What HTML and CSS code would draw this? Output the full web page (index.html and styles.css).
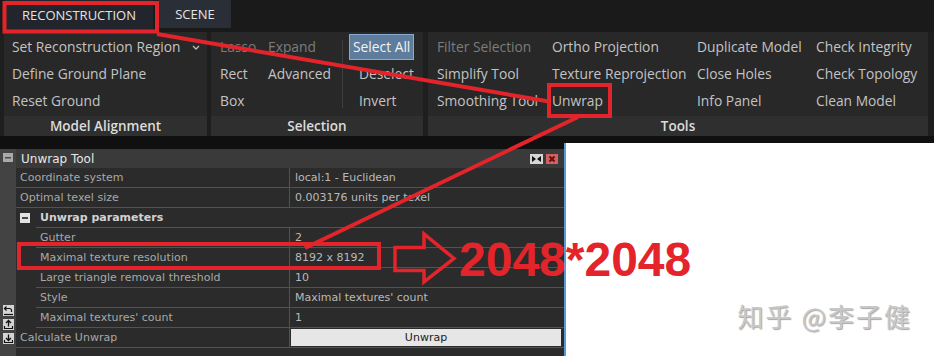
FILE: index.html
```html
<!DOCTYPE html>
<html lang="en">
<head>
  <meta charset="UTF-8">
  <title>Unwrap Tool</title>
  <link rel="stylesheet" href="styles.css">
</head>
<body>

<div class="ribbon">
  <div class="tabs">
    <div class="tab tab-active">RECONSTRUCTION</div>
    <div class="tab-sep"></div>
    <div class="tab">SCENE</div>
  </div>

  <div class="groups">
    <div class="group group-align">
      <div class="items">
        <div class="col">
          <div class="item">Set Reconstruction Region
            <svg class="chev" width="8" height="5" viewBox="0 0 8 5"><path d="M1 1 L4 4 L7 1" fill="none" stroke="#bdbdbd" stroke-width="1.3"/></svg>
          </div>
          <div class="item">Define Ground Plane</div>
          <div class="item">Reset Ground</div>
        </div>
      </div>
      <div class="group-label">Model Alignment</div>
    </div>

    <div class="group group-select">
      <div class="items">
        <div class="col col-sel1">
          <div class="item off">Lasso</div>
          <div class="item">Rect</div>
          <div class="item">Box</div>
        </div>
        <div class="col col-sel2">
          <div class="item off">Expand</div>
          <div class="item">Advanced</div>
        </div>
        <div class="vsep"></div>
        <div class="col col-sel3">
          <div class="item"><span class="btn-select">Select All</span></div>
          <div class="item pad">Deselect</div>
          <div class="item pad">Invert</div>
        </div>
      </div>
      <div class="group-label">Selection</div>
    </div>

    <div class="group group-tools">
      <div class="items">
        <div class="col col-t1">
          <div class="item off">Filter Selection</div>
          <div class="item">Simplify Tool</div>
          <div class="item">Smoothing Tool</div>
        </div>
        <div class="col col-t2">
          <div class="item">Ortho Projection</div>
          <div class="item">Texture Reprojection</div>
          <div class="item">Unwrap</div>
        </div>
        <div class="col col-t3">
          <div class="item">Duplicate Model</div>
          <div class="item">Close Holes</div>
          <div class="item">Info Panel</div>
        </div>
        <div class="col">
          <div class="item">Check Integrity</div>
          <div class="item">Check Topology</div>
          <div class="item">Clean Model</div>
        </div>
      </div>
      <div class="group-label">Tools</div>
    </div>
  </div>
</div>

<div class="lower">
  <div class="panel">
    <div class="side">
      <svg class="collapse" width="10" height="9" viewBox="0 0 10 9"><rect width="10" height="9" fill="#a9a9a9"/><rect x="2" y="4" width="6" height="1.5" fill="#4a4a4a"/></svg>
      <div class="side-tools">
        <svg width="11" height="11" viewBox="0 0 11 11"><rect width="11" height="11" fill="#d4d4d4"/><path d="M3.5 1.5 L1.5 3.5 L3.5 5.5 M1.5 3.5 H6.5 Q8.5 3.5 8.5 5.5 V7" fill="none" stroke="#111" stroke-width="1.2"/><path d="M1 9.5 H10" stroke="#111" stroke-width="1.2"/></svg>
        <svg width="11" height="11" viewBox="0 0 11 11"><rect width="11" height="11" fill="#d4d4d4"/><path d="M5.5 1.5 V7.5 M3 4 L5.5 1.5 L8 4" fill="none" stroke="#111" stroke-width="1.3"/><path d="M1.5 7 V9.5 H9.5 V7" fill="none" stroke="#111" stroke-width="1.2"/></svg>
        <svg width="11" height="11" viewBox="0 0 11 11"><rect width="11" height="11" fill="#d4d4d4"/><path d="M5.5 1.5 V7.5 M3 5 L5.5 7.5 L8 5" fill="none" stroke="#111" stroke-width="1.3"/><path d="M1.5 7 V9.5 H9.5 V7" fill="none" stroke="#111" stroke-width="1.2"/></svg>
      </div>
    </div>

    <div class="main">
      <div class="titlebar">
        <span>Unwrap Tool</span>
        <div class="tb-btns">
          <svg width="13" height="10" viewBox="0 0 13 10"><rect width="13" height="10" fill="#d6d6d6"/><path d="M2 2 L6 5 L2 8 Z M11 2 L7 5 L11 8 Z" fill="#111"/></svg>
          <svg width="12" height="10" viewBox="0 0 12 10"><rect width="12" height="10" fill="#cf6262"/><path d="M3.5 2.5 L8.5 7.5 M8.5 2.5 L3.5 7.5" stroke="#6e0c0c" stroke-width="2"/></svg>
        </div>
      </div>

      <div class="row">
        <div class="name">Coordinate system</div>
        <div class="val">local:1 - Euclidean</div>
      </div>
      <div class="row">
        <div class="name">Optimal texel size</div>
        <div class="val">0.003176 units per texel</div>
      </div>
      <div class="row row-cat">
        <div class="indent">
          <svg width="10" height="10" viewBox="0 0 10 10"><rect width="10" height="10" fill="#e2e2e2"/><rect x="2" y="4.2" width="6" height="1.6" fill="#222"/></svg>
        </div>
        <div class="name">Unwrap parameters</div>
      </div>
      <div class="row">
        <div class="indent"></div>
        <div class="name sub">Gutter</div>
        <div class="val">2</div>
      </div>
      <div class="row">
        <div class="indent"></div>
        <div class="name sub">Maximal texture resolution</div>
        <div class="val">8192 x 8192</div>
      </div>
      <div class="row">
        <div class="indent"></div>
        <div class="name sub">Large triangle removal threshold</div>
        <div class="val">10</div>
      </div>
      <div class="row">
        <div class="indent"></div>
        <div class="name sub">Style</div>
        <div class="val">Maximal textures' count</div>
      </div>
      <div class="row">
        <div class="indent"></div>
        <div class="name sub">Maximal textures' count</div>
        <div class="val">1</div>
      </div>
      <div class="row">
        <div class="name">Calculate Unwrap</div>
        <div class="val btn-cell"><div class="unwrap-btn">Unwrap</div></div>
      </div>
    </div>
  </div>

  <div class="canvas">
    <div class="watermark">知乎 @李子健</div>
  </div>
</div>

<!-- red annotations drawn over the screenshot -->
<svg class="annot" width="934" height="356" viewBox="0 0 934 356">
  <g fill="none" stroke="#e3242b" stroke-width="4">
    <rect x="4.5" y="3" width="152.5" height="28.5"/>
    <line x1="157" y1="34" x2="549" y2="101.5"/>
    <rect x="549" y="85" width="61" height="31"/>
    <line x1="578" y1="117" x2="305" y2="248"/>
    <rect x="19" y="244" width="360" height="24"/>
  </g>
  <polygon points="395,247.5 424,247.5 424,234 454,258.5 424,282 424,270.5 395,270.5" fill="none" stroke="#e3242b" stroke-width="3.5"/>
</svg>
<div class="big-note">2048*2048</div>

</body>
</html>
```

FILE: styles.css
```css
* { margin: 0; padding: 0; box-sizing: border-box; }
body {
  width: 934px;
  height: 356px;
  overflow: hidden;
  position: relative;
  background-color: #101010;
  font-family: 'Open Sans', 'Noto Sans', sans-serif;
}

/* ribbon */
.ribbon {
  height: 136px;
  margin-bottom: 7px;
  background-color: #1e1e1e;
}
.tabs {
  height: 32px;
  display: flex;
  padding-left: 5px;
  background-color: #1a1a1a;
}
.tab {
  display: flex;
  align-items: center;
  justify-content: center;
  height: 28px;
  width: 72px;
  font-size: 13px;
  color: #e4e4e4;
  background-color: #2a2f37;
}
.tab-active {
  width: 148px;
  height: 32px;
  padding-bottom: 3px;
  background-color: #22262c;
}
.tab-sep {
  width: 1px;
  height: 24px;
  margin: 3px 3px 0 2px;
  background-color: #555;
}
.groups {
  display: flex;
  height: 104px;
  padding-left: 4px;
}
.group {
  display: flex;
  flex-direction: column;
}
.group-align { width: 203px; margin-right: 4px; }
.group-select { width: 212px; margin-right: 5px; }
.group-tools { width: 500px; }
.items {
  height: 84px;
  display: flex;
  padding: 1px 0 0 9px;
  background-color: #282828;
}
.group-align .items { padding-left: 8px; }
.group-label {
  height: 20px;
  line-height: 20px;
  text-align: center;
  font-size: 13.5px;
  font-weight: 600;
  color: #dcdcdc;
  background-color: #2f2f2f;
}
.item {
  height: 27px;
  line-height: 27px;
  font-size: 13.8px;
  color: #c3c3c3;
  white-space: nowrap;
}
.item.off { color: #7c7c7c; }
.item.pad { padding-left: 10px; }
.chev {
  margin-left: 8px;
  vertical-align: 2px;
}
.col-sel1 { width: 48px; }
.col-sel2 { width: 74px; }
.col-sel3 { padding-left: 6px; }
.vsep {
  width: 1px;
  margin: 7px 0 8px;
  background-color: #3f3f3f;
}
.btn-select {
  display: inline-block;
  height: 26px;
  line-height: 24px;
  padding: 0 3px;
  border: 1px solid #86aad2;
  background-color: #5e7c9c;
  color: #f2f2f2;
}
.col-t1 { width: 115px; }
.col-t2 { width: 145px; }
.col-t3 { width: 119px; }

/* lower part: tool panel + canvas */
.lower {
  display: flex;
  height: 213px;
}
.panel {
  width: 564px;
  display: flex;
  padding-top: 6px;
}
.side {
  width: 16px;
  display: flex;
  flex-direction: column;
  align-items: center;
  background-color: #434343;
}
.collapse { margin-top: 4px; }
.side-tools {
  margin-top: auto;
  padding-bottom: 12px;
  display: flex;
  flex-direction: column;
  gap: 3px;
}
.main {
  flex: 1;
  background-color: #2b2b2b;
  font-family: 'DejaVu Sans', Verdana, sans-serif;
}
.titlebar {
  height: 19px;
  display: flex;
  align-items: center;
  justify-content: space-between;
  padding: 0 6px 0 5px;
  font-size: 12px;
  color: #e6e6e6;
  background-color: #3a3a3a;
}
.tb-btns {
  display: flex;
  gap: 3px;
}
.row {
  display: flex;
  height: 20px;
  font-size: 11px;
  color: #a8a8a8;
}
.row .name {
  width: 273px;
  padding-left: 4px;
  line-height: 19px;
  border-bottom: 1px solid #525252;
}
.row .name.sub { width: 253px; }
.row .indent {
  width: 20px;
  padding: 5px 0 0 4px;
}
.row .val {
  flex: 1;
  padding-left: 5px;
  line-height: 19px;
  color: #b9b9b9;
  border-left: 1px solid #525252;
  border-bottom: 1px solid #525252;
}
.row-cat .name {
  flex: 1;
  font-weight: bold;
  color: #d2d2d2;
}
.row .btn-cell {
  padding: 1px 3px 0 1px;
}
.unwrap-btn {
  height: 17px;
  line-height: 17px;
  text-align: center;
  color: #222;
  background-color: #e6e6e6;
}

.canvas {
  flex: 1;
  display: flex;
  justify-content: flex-end;
  align-items: flex-end;
  padding: 0 22px 27px 0;
  background-color: #fff;
  border-left: 2px solid #5b9ad8;
}
.watermark {
  font-family: 'Noto Sans CJK SC', 'Noto Sans', sans-serif;
  font-size: 26px;
  line-height: 26px;
  letter-spacing: 2px;
  color: #c8c8c8;
  text-shadow: 1px 1px 1px rgba(0, 0, 0, 0.35);
}

/* annotations */
.annot {
  position: absolute;
  left: 0;
  top: 0;
  pointer-events: none;
}
.big-note {
  position: absolute;
  left: 459px;
  top: 236px;
  font-family: 'Liberation Sans', Arial, sans-serif;
  font-weight: bold;
  font-size: 48px;
  line-height: 48px;
  color: #e3242b;
}
```
